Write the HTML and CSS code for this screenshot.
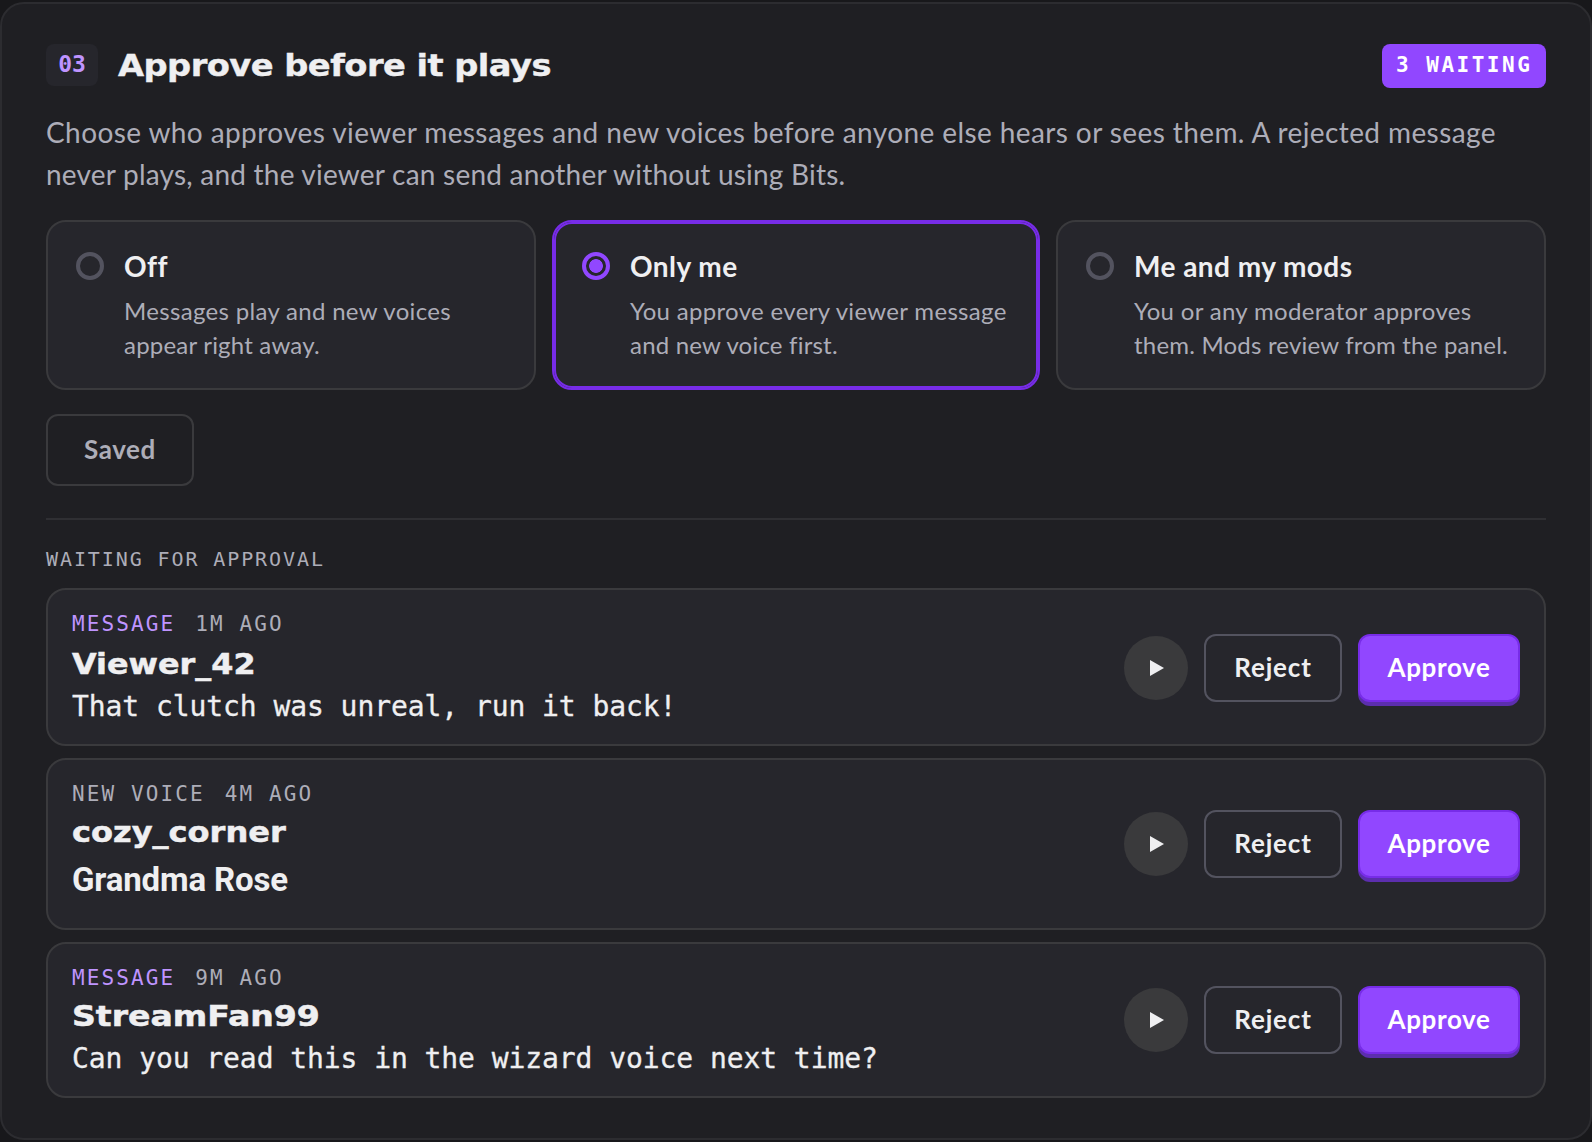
FILE: index.html
```html
<!DOCTYPE html>
<html lang="en">
<head>
    <meta charset="UTF-8">
    <meta name="viewport" content="width=device-width, initial-scale=1.0">
    <title>Approve before it plays</title>
    <link rel="stylesheet" href="styles.css">
</head>
<body>
    <section class="panel">
        <header class="panel-header">
            <span class="step">03</span>
            <h2>Approve before it plays</h2>
            <span class="waiting-badge">3 WAITING</span>
        </header>

        <p class="intro">Choose who approves viewer messages and new voices before anyone else hears or sees them. A rejected message<br>never plays, and the viewer can send another without using Bits.</p>

        <div class="options">
            <div class="option">
                <span class="radio"></span>
                <div>
                    <h3>Off</h3>
                    <p>Messages play and new voices<br>appear right away.</p>
                </div>
            </div>
            <div class="option selected">
                <span class="radio"></span>
                <div>
                    <h3>Only me</h3>
                    <p>You approve every viewer message<br>and new voice first.</p>
                </div>
            </div>
            <div class="option">
                <span class="radio"></span>
                <div>
                    <h3>Me and my mods</h3>
                    <p>You or any moderator approves<br>them. Mods review from the panel.</p>
                </div>
            </div>
        </div>

        <button class="saved-btn">Saved</button>

        <div class="queue">
            <h4>WAITING FOR APPROVAL</h4>

            <article class="item item-viewer">
                <div class="info">
                    <div class="meta"><span class="kind">MESSAGE</span><span>1M AGO</span></div>
                    <div class="name">Viewer_42</div>
                    <div class="message">That clutch was unreal, run it back!</div>
                </div>
                <div class="actions">
                    <button class="play-btn" aria-label="Play"><svg width="14" height="16" viewBox="0 0 14 16"><path d="M0 0L14 8L0 16Z" fill="#efeff1"/></svg></button>
                    <button class="reject-btn">Reject</button>
                    <button class="approve-btn">Approve</button>
                </div>
            </article>

            <article class="item item-cozy">
                <div class="info">
                    <div class="meta"><span>NEW VOICE</span><span>4M AGO</span></div>
                    <div class="name">cozy_corner</div>
                    <div class="voice">Grandma Rose</div>
                </div>
                <div class="actions">
                    <button class="play-btn" aria-label="Play"><svg width="14" height="16" viewBox="0 0 14 16"><path d="M0 0L14 8L0 16Z" fill="#efeff1"/></svg></button>
                    <button class="reject-btn">Reject</button>
                    <button class="approve-btn">Approve</button>
                </div>
            </article>

            <article class="item item-fan">
                <div class="info">
                    <div class="meta"><span class="kind">MESSAGE</span><span>9M AGO</span></div>
                    <div class="name">StreamFan99</div>
                    <div class="message">Can you read this in the wizard voice next time?</div>
                </div>
                <div class="actions">
                    <button class="play-btn" aria-label="Play"><svg width="14" height="16" viewBox="0 0 14 16"><path d="M0 0L14 8L0 16Z" fill="#efeff1"/></svg></button>
                    <button class="reject-btn">Reject</button>
                    <button class="approve-btn">Approve</button>
                </div>
            </article>
        </div>
    </section>
</body>
</html>
```
FILE: styles.css
```css
* {
    box-sizing: border-box;
}
body {
    margin: 0;
    padding: 2px 0;
    height: 1142px;
    background-color: #18181b;
    font-family: Lato, "Open Sans", sans-serif;
    color: #efeff1;
    white-space: nowrap;
    overflow: hidden;
}
h2, h3, h4, p {
    margin: 0;
}
button {
    font-family: inherit;
    padding: 0;
}
.panel {
    height: 1138px;
    padding: 40px 44px;
    border: 2px solid #2c2c30;
    border-radius: 24px;
    background-color: #1f1f23;
}
.panel-header {
    display: flex;
    align-items: flex-start;
    height: 44px;
}
.step {
    width: 52px;
    height: 42px;
    border-radius: 8px;
    background-color: #26262c;
    color: #bf94ff;
    font: bold 23px/41px "DejaVu Sans Mono", monospace;
    text-align: center;
}
h2 {
    margin-left: 20px;
    font: bold 31px/42px "DejaVu Sans", sans-serif;
    letter-spacing: -0.5px;
    transform: scaleX(1.087);
    transform-origin: left;
    -webkit-text-stroke: 0.4px #efeff1;
}
.waiting-badge {
    width: 164px;
    height: 44px;
    margin-left: auto;
    padding-left: 14px;
    border-radius: 8px;
    background-color: #9147ff;
    color: #fff;
    font: bold 21px/43px "DejaVu Sans Mono", monospace;
    letter-spacing: 2.5px;
}
.intro {
    margin-top: 23px;
    height: 84px;
    color: #adadb8;
    font-size: 28px;
    line-height: 42px;
    letter-spacing: 0.22px;
}
.intro::first-line {
    letter-spacing: 0.405px;
}
.options {
    display: grid;
    grid-template-columns: 490px 488px 490px;
    gap: 16px;
    margin-top: 25px;
}
.option {
    display: flex;
    gap: 20px;
    height: 170px;
    padding: 28px;
    border: 2px solid #3a3a3d;
    border-radius: 20px;
    background-color: #26262c;
}
.option h3 {
    margin-top: -2px;
    font-size: 28px;
    font-weight: bold;
    line-height: 36px;
    letter-spacing: 0.45px;
}
.option p {
    margin-top: 10px;
    color: #adadb8;
    font-size: 24px;
    line-height: 34px;
    letter-spacing: 0.2px;
}
.option p::first-line {
    letter-spacing: 0.32px;
}
.radio {
    flex: none;
    width: 28px;
    height: 28px;
    margin-top: 2px;
    border: 4px solid #53535f;
    border-radius: 50%;
}
.selected {
    border-color: #772ce8;
    box-shadow: inset 0 0 0 2px #772ce8;
}
.selected .radio {
    border-color: #9147ff;
    background: radial-gradient(circle, #9147ff 6.5px, transparent 7.2px);
}
.saved-btn {
    display: block;
    width: 148px;
    height: 72px;
    margin-top: 24px;
    padding-bottom: 2px;
    border: 2px solid #3a3a3d;
    border-radius: 12px;
    background: none;
    color: #adadb8;
    font-size: 26px;
    font-weight: bold;
    letter-spacing: 0.6px;
}
.queue {
    display: flex;
    flex-direction: column;
    gap: 12px;
    margin-top: 32px;
    padding-top: 26px;
    border-top: 2px solid #2f2f33;
}
.queue h4 {
    height: 30px;
    color: #adadb8;
    font: 20px/26px "DejaVu Sans Mono", monospace;
    letter-spacing: 1.9px;
}
.item {
    display: flex;
    align-items: center;
    justify-content: space-between;
    height: 156px;
    padding: 0 24px;
    border: 2px solid #3a3a3d;
    border-radius: 20px;
    background-color: #26262c;
}
.item-viewer {
    height: 158px;
}
.item-cozy {
    height: 172px;
}
.info {
    align-self: flex-start;
    padding-top: 20px;
}
.meta {
    display: flex;
    gap: 20px;
    color: #adadb8;
    font: 21px/28px "DejaVu Sans Mono", monospace;
    letter-spacing: 2.1px;
}
.kind {
    color: #bf94ff;
}
.name {
    height: 46px;
    font: bold 29px/48px "DejaVu Sans", sans-serif;
    transform: scaleX(1.105);
    transform-origin: left;
    -webkit-text-stroke: 0.5px #efeff1;
}
.item-viewer .name {
    height: 48px;
    line-height: 52px;
    transform: scaleX(1.098);
}
.item-fan .name {
    transform: scaleX(1.141);
}
.message {
    font: 28px/42px "DejaVu Sans Mono", monospace;
    letter-spacing: -0.07px;
    -webkit-text-stroke: 0.3px #efeff1;
}
.voice {
    font: bold 33px/52px Roboto, sans-serif;
    letter-spacing: -0.15px;
}
.actions {
    display: flex;
    align-items: center;
    gap: 16px;
}
.item-viewer .actions {
    margin-top: 2px;
}
.play-btn {
    display: flex;
    align-items: center;
    justify-content: center;
    width: 64px;
    height: 64px;
    padding-left: 2px;
    border: none;
    border-radius: 50%;
    background-color: #3a3a3c;
}
.reject-btn, .approve-btn {
    height: 68px;
    padding-bottom: 2px;
    border-radius: 12px;
    font-size: 26px;
    font-weight: bold;
    letter-spacing: 0.6px;
}
.reject-btn {
    width: 138px;
    border: 2px solid #53535f;
    background: none;
    color: #efeff1;
    letter-spacing: 0.85px;
}
.approve-btn {
    width: 162px;
    border: 2px solid #772ce8;
    background-color: #9147ff;
    box-shadow: 0 4px 0 #5c2eae;
    color: #fff;
}
```
